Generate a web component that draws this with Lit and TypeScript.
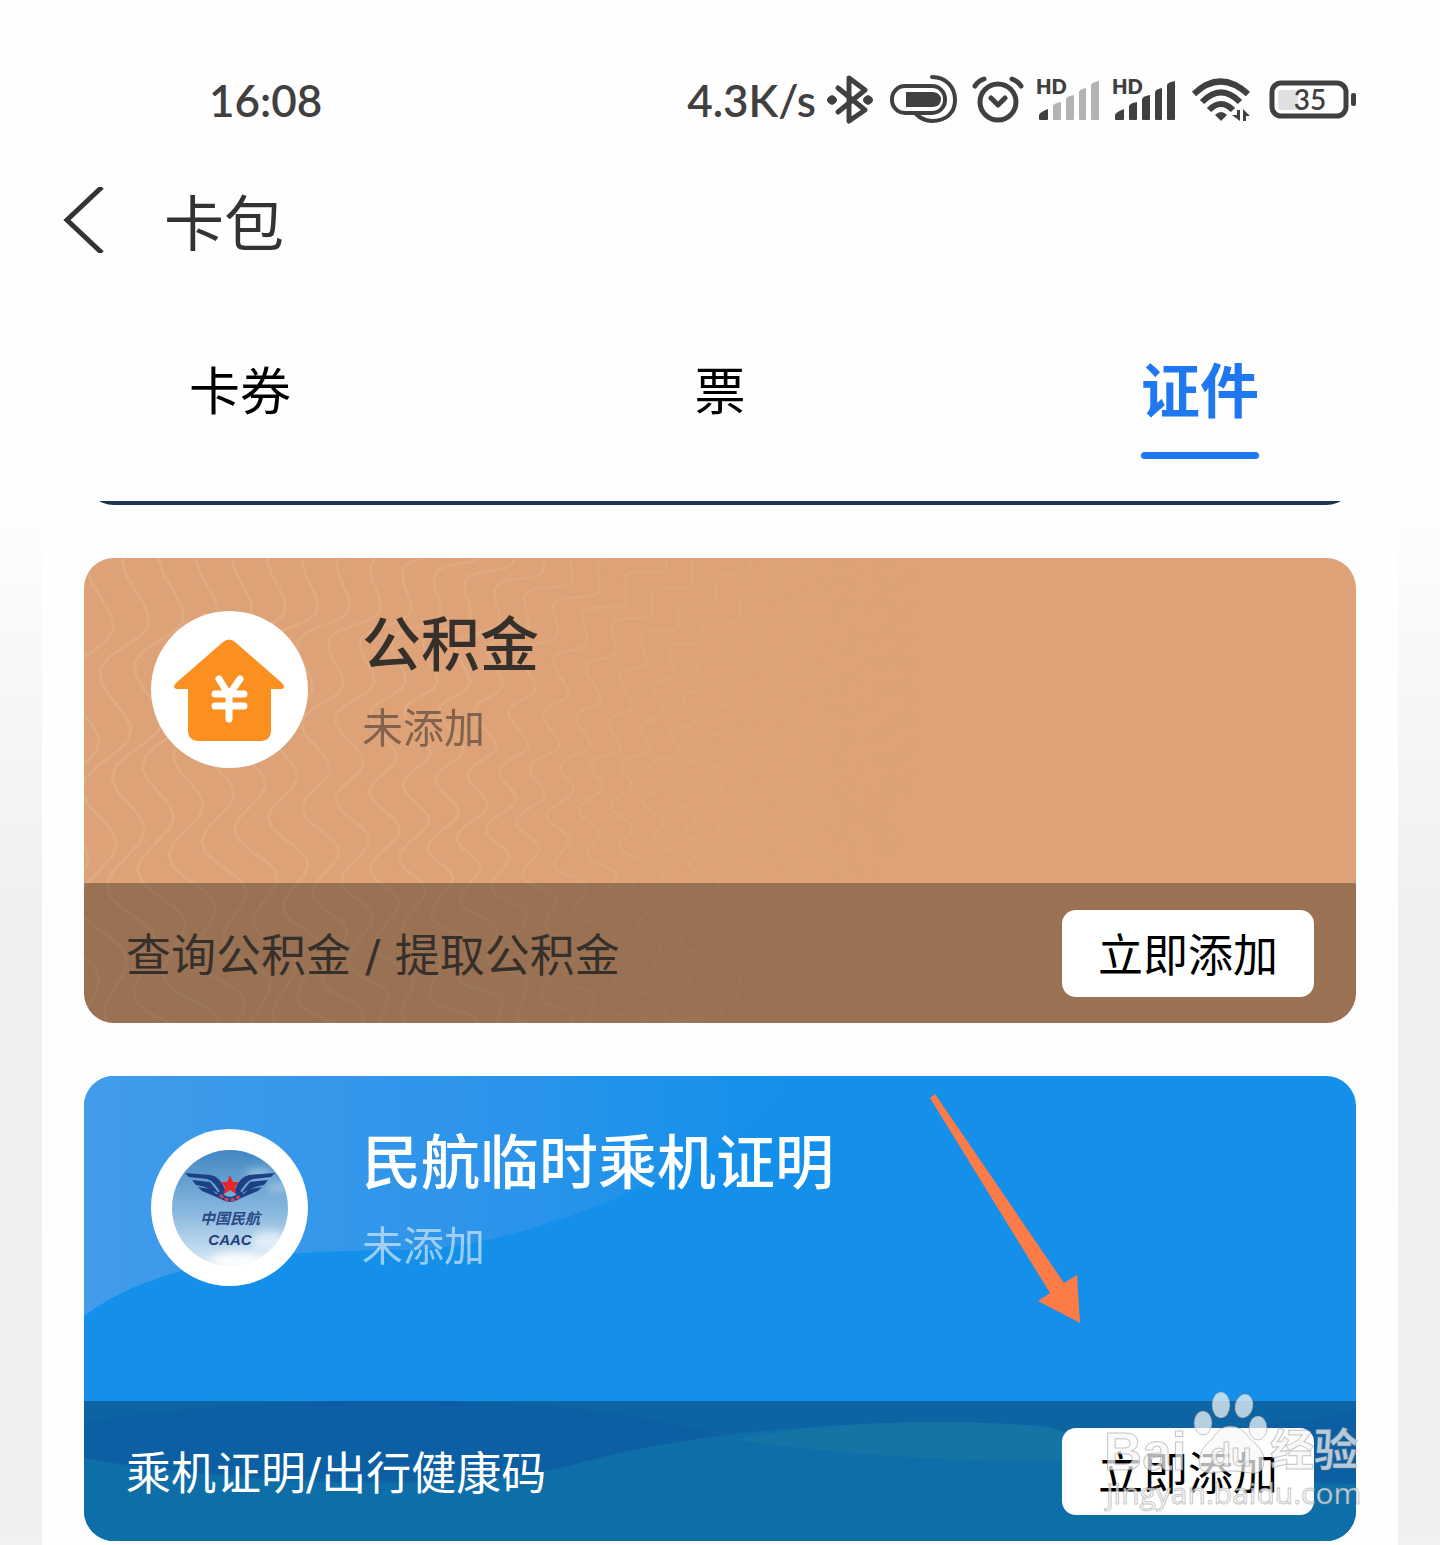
import { LitElement, html, svg, css, nothing } from "lit";
import { customElement, property, state } from "lit/decorators.js";
import { classMap } from "lit/directives/class-map.js";

interface Credential {
  id: string;
  title: string;
  status: string;
  summary: string;
  action: string;
}

const CREDENTIALS: Credential[] = [
  { id: "fund", title: "公积金", status: "未添加", summary: "查询公积金 / 提取公积金", action: "立即添加" },
  { id: "flight", title: "民航临时乘机证明", status: "未添加", summary: "乘机证明/出行健康码", action: "立即添加" },
];

const TABS = ["卡券", "票", "证件"];

/* Guilloche pattern: rings around a point, each rippled and slightly out of phase with the last. */
function guilloche(cx: number, cy: number): string[] {
  const rings: string[] = [];
  for (let i = 0; i < 30; i++) {
    const r = 40 + i * 31;
    const points: string[] = [];
    for (let deg = 120; deg <= 290; deg += 1) {
      const a = (deg * Math.PI) / 180;
      const ripple = (4 + r * 0.02) * Math.sin(42 * a + i * 0.75) + 7 * Math.sin(11 * a + i * 0.5);
      const x = cx + (r + ripple) * Math.cos(a);
      const y = cy + (r + ripple) * Math.sin(a) * 0.94;
      points.push(`${x.toFixed(1)} ${y.toFixed(1)}`);
    }
    rings.push("M" + points.join("L"));
  }
  return rings;
}

const RINGS = guilloche(830, 260);

@customElement("status-bar")
export class StatusBar extends LitElement {
  static styles = css`
    :host {
      display: flex;
      justify-content: space-between;
      align-items: center;
      padding: 72px 84px 0 209px;
      line-height: 56px;
      font-family: Lato, "Noto Sans CJK SC", sans-serif;
      font-size: 44px;
      font-weight: 600;
      color: #404040;
    }
    .right {
      display: flex;
      align-items: center;
      gap: 14px;
    }
    svg {
      display: block;
      overflow: visible;
    }
    .line {
      fill: none;
      stroke: #404040;
      stroke-linecap: round;
      stroke-linejoin: round;
    }
    .solid {
      fill: #404040;
    }
    .dim {
      fill: #b3b3b3;
    }
    .level {
      fill: #e0e0e0;
    }
    .hd {
      font-size: 20px;
      font-weight: 800;
      fill: #404040;
    }
    .percent {
      font-size: 28px;
      font-weight: 600;
      fill: #404040;
    }
  `;

  private signal(strong: boolean) {
    const rest = strong ? "solid" : "dim";
    return svg`<svg width="62" height="42" viewBox="2 0 62 42" aria-hidden="true">
      <text class="hd" x="0" y="15">HD</text>
      <path class="solid" d="M3 41V36Q4 33 12 30V40Q12 41 11 41H4Q3 41 3 40Z"></path>
      <path class=${rest} d="M17 40V27Q18 24 25 23V40Q25 41 24 41H18Q17 41 17 40Z"></path>
      <path class=${rest} d="M30 40V20Q31 17 38 16V40Q38 41 37 41H31Q30 41 30 40Z"></path>
      <path class=${rest} d="M43 40V13Q44 10 50 9V40Q50 41 49 41H44Q43 41 43 40Z"></path>
      <path class=${rest} d="M55 40V6Q56 3 63 2V40Q63 41 62 41H56Q55 41 55 40Z"></path>
    </svg>`;
  }

  render() {
    return html`
      <span>16:08</span>
      <div class="right">
        <span>4.3K/s</span>
        <svg width="42" height="50" viewBox="3 0 42 50" aria-hidden="true">
          <path class="line" stroke-width="5" d="M11 13L38 35L22 46V3L38 15L11 37"></path>
          <path class="solid" d="M5 20Q10 22 10 25T5 30Q0 28 0 25T5 20ZM41 20Q46 22 46 25T41 30Q36 28 36 25T41 20Z"></path>
        </svg>
        <svg width="72" height="50" viewBox="-3 0 72 50" aria-hidden="true">
          <rect class="line" stroke-width="4" x="3" y="11" width="53" height="27" rx="13"></rect>
          <path class="line" stroke-width="4" d="M43 2C57 2 66 12 66 25S57 46 43 46Q34 46 27 39"></path>
          <path class="solid" d="M17 17H44Q52 18 52 24.500T44 32H17Z"></path>
        </svg>
        <svg width="52" height="50" viewBox="0 0 52 50" aria-hidden="true">
          <circle class="line" stroke-width="5" cx="26" cy="27" r="18"></circle>
          <path class="line" stroke-width="5" d="M19 23L26 30L33 23M3 11Q6 6 12 4M49 11Q46 6 40 4"></path>
        </svg>
        ${this.signal(false)} ${this.signal(true)}
        <svg width="64" height="48" viewBox="-1 0 64 48" aria-hidden="true">
          <g fill="none" stroke="#404040" stroke-width="6">
            <path d="M3 18Q29 -7 57 18"></path>
            <path d="M11 26Q30 7 49 26"></path>
            <path d="M18 34Q30 22 42 34"></path>
          </g>
          <path class="solid" d="M24 39Q30 33 36 39L30 45Z"></path>
          <path class="solid" d="M46 34H49V45L41 39H46ZM52 45V33L59 40H55V45Z"></path>
        </svg>
        <svg width="88" height="40" viewBox="0 0 88 40" aria-hidden="true">
          <rect class="line" stroke-width="5" x="4" y="3" width="74" height="33" rx="9"></rect>
          <rect class="level" x="10" y="10" width="20" height="20" rx="3"></rect>
          <rect class="solid" x="83" y="13" width="5" height="13" rx="2"></rect>
          <text class="percent" x="42" y="30" text-anchor="middle">35</text>
        </svg>
      </div>
    `;
  }
}

@customElement("credential-card")
export class CredentialCard extends LitElement {
  @property({ attribute: false }) item!: Credential;

  static styles = css`
    :host {
      display: block;
    }
    .card {
      display: grid;
      overflow: hidden;
      border-radius: 30px;
      background: #dda277;
      color: #36302c;
    }
    .flight {
      background: #1490ea;
      color: #fff;
    }
    .art,
    .content {
      grid-area: 1 / 1;
      min-width: 0;
    }
    .art {
      width: 100%;
      height: 100%;
      min-height: 0;
      contain: size;
    }
    .top {
      display: flex;
      gap: 54px;
      min-height: 272px;
      padding: 53px 67px 0;
    }
    .badge {
      flex: none;
      width: 157px;
      height: 157px;
    }
    h2 {
      margin: 0;
      font-size: 59px;
      font-weight: 500;
      line-height: 60px;
    }
    .status {
      margin: 24px 0 0;
      font-size: 41px;
      line-height: 60px;
      opacity: 0.55;
    }
    .foot {
      display: flex;
      align-items: center;
      justify-content: space-between;
      min-height: 140px;
      padding: 0 42px;
      background: rgba(0, 0, 0, 0.3);
    }
    .summary {
      margin: 0;
      padding-top: 8px;
      font-family: "DejaVu Sans", "Noto Sans CJK SC", sans-serif;
      font-size: 45px;
      line-height: 64px;
    }
    button {
      border: 0;
      border-radius: 14px;
      padding: 11px 36px 12px;
      background: #fff;
      color: #000;
      font: inherit;
      font-size: 45px;
      line-height: 64px;
    }
    .ring {
      fill: none;
      stroke: #e9bd96;
      stroke-width: 3;
      stroke-linejoin: round;
      opacity: 0.36;
    }
    .caac {
      font: italic 700 15px "Liberation Sans", sans-serif;
      fill: #253c7d;
    }
    .script {
      font: italic 700 15px "Noto Sans CJK SC", sans-serif;
      fill: #2a4a86;
    }
  `;

  private fundArt() {
    return svg`<svg class="art" viewBox="0 0 1272 465" preserveAspectRatio="none" aria-hidden="true">
      <defs>
        <linearGradient id="fade">
          <stop offset="0" stop-color="#fff"></stop>
          <stop offset="0.3" stop-color="#fff" stop-opacity="0.8"></stop>
          <stop offset="0.66" stop-color="#fff" stop-opacity="0"></stop>
        </linearGradient>
        <mask id="veil"><rect width="1272" height="465" fill="url(#fade)"></rect></mask>
      </defs>
      <g mask="url(#veil)">${RINGS.map((d) => svg`<path class="ring" d=${d}></path>`)}</g>
    </svg>`;
  }

  private flightArt() {
    return svg`<svg class="art" viewBox="0 0 1272 465" preserveAspectRatio="none" aria-hidden="true">
      <defs>
        <linearGradient id="hill">
          <stop offset="0" stop-color="#429ceb"></stop>
          <stop offset="0.6" stop-color="#2b94ea"></stop>
          <stop offset="1" stop-color="#1490ea"></stop>
        </linearGradient>
      </defs>
      <path fill="url(#hill)" d="M0 0H705C670 50 610 90 527 124C440 160 370 175 300 174C200 176 80 180 0 240Z"></path>
      <path fill="#1088e9" d="M0 346C180 318 480 310 653 364C560 396 430 410 300 404C180 402 90 398 0 382Z"></path>
      <path fill="#1088e9" d="M1020 350C1110 360 1190 350 1272 335V408C1180 400 1100 380 1020 350Z"></path>
      <path fill="#159ef0" d="M0 382C120 404 330 420 476 392C600 356 740 345 900 347C1040 372 1140 410 1272 408V465H0Z"></path>
      <path fill="#1fa7ed" d="M653 364C740 345 850 343 960 350L1060 380C900 392 760 378 653 364Z"></path>
    </svg>`;
  }

  private fundBadge() {
    return svg`<svg class="badge" viewBox="0 0 157 157" aria-hidden="true">
      <circle cx="78.500" cy="78.500" r="78.500" fill="#fff"></circle>
      <path fill="#fb8f20" d="M72 31Q78 26 84 31L131 72Q136 78 129 78H120V119Q120 130 109 130H48Q37 130 37 119V78H28Q20 78 25 72Z"></path>
      <path fill="none" stroke="#fff" stroke-width="7" stroke-linecap="round" stroke-linejoin="round"
        d="M68 68L78 84L89 68M78 84V108M64 83H93M64 95H93"></path>
    </svg>`;
  }

  private flightBadge() {
    return svg`<svg class="badge" viewBox="0 0 157 157" aria-hidden="true">
      <defs>
        <linearGradient id="sky" x2="0" y2="1">
          <stop offset="0" stop-color="#3f86c2"></stop>
          <stop offset="0.55" stop-color="#8bbadf"></stop>
          <stop offset="1" stop-color="#dcebf6"></stop>
        </linearGradient>
        <clipPath id="disc"><circle cx="79" cy="79" r="58"></circle></clipPath>
        <filter id="cloud"><feGaussianBlur stdDeviation="4"></feGaussianBlur></filter>
      </defs>
      <circle cx="78.500" cy="78.500" r="78.500" fill="#fff"></circle>
      <g clip-path="url(#disc)">
        <rect x="20" y="20" width="118" height="118" fill="url(#sky)"></rect>
        <g filter="url(#cloud)" fill="#fff">
          <ellipse cx="118" cy="112" rx="18" ry="10" opacity="0.6"></ellipse>
          <ellipse cx="88" cy="132" rx="30" ry="9" opacity="0.9"></ellipse>
          <ellipse cx="108" cy="44" rx="14" ry="4" opacity="0.45"></ellipse>
          <ellipse cx="127" cy="58" rx="12" ry="4" opacity="0.4"></ellipse>
        </g>
      </g>
      <g fill="#1d3f83">
        <path d="M34 44L60 46Q70 48 75 63L71 67Q64 52 56 50L38 48Z"></path>
        <path d="M124 44L98 46Q88 48 83 63L87 67Q94 52 102 50L120 48Z"></path>
        <path d="M41 51L59 53L71 68Q60 58 45 56ZM47 58L60 60L72 71Q61 66 51 62Z"></path>
        <path d="M117 51L99 53L87 68Q98 58 113 56ZM111 58L98 60L86 71Q97 66 107 62Z"></path>
      </g>
      <path fill="none" stroke="#1d3f83" stroke-width="5" d="M67 64Q79 77 91 64"></path>
      <path fill="none" stroke="#c8475c" stroke-width="3" stroke-dasharray="4 2" d="M69 66Q79 76 90 66"></path>
      <path fill="#e8262e" d="M79 46L82 53L88 53L84 58L85 65L79 61L73 65L74 58L70 53L76 53Z"></path>
      <text class="script" x="79" y="95" text-anchor="middle">中国民航</text>
      <text class="caac" x="79" y="116" text-anchor="middle">CAAC</text>
    </svg>`;
  }

  render() {
    if (!this.item) return nothing;
    const flight = this.item.id === "flight";
    return html`
      <article class=${classMap({ card: true, flight })}>
        ${flight ? this.flightArt() : this.fundArt()}
        <div class="content">
          <div class="top">
            ${flight ? this.flightBadge() : this.fundBadge()}
            <div>
              <h2>${this.item.title}</h2>
              <p class="status">${this.item.status}</p>
            </div>
          </div>
          <div class="foot">
            <p class="summary">${this.item.summary}</p>
            <button type="button">${this.item.action}</button>
          </div>
        </div>
      </article>
    `;
  }
}

@customElement("app-root")
export class AppRoot extends LitElement {
  @state() private tab = 2;

  static styles = css`
    :host {
      display: flex;
      flex-direction: column;
      min-height: 100vh;
      background: #fefefe;
      font-family: "Noto Sans CJK SC", sans-serif;
      color: #333;
    }
    .header {
      display: flex;
      align-items: center;
      gap: 60px;
      padding: 48px 62px 0;
    }
    .back {
      display: block;
      border: 0;
      padding: 0;
      background: none;
    }
    .back svg {
      display: block;
    }
    h1 {
      margin: 0;
      font-size: 60px;
      font-weight: 400;
      line-height: 88px;
    }
    .tabs {
      display: grid;
      grid-template-columns: repeat(3, 1fr);
      justify-items: center;
      padding: 84px 0 42px;
    }
    .tab {
      border: 0;
      border-bottom: 7px solid transparent;
      padding: 0;
      background: none;
      color: #000;
      font: inherit;
      font-size: 51px;
      line-height: 80px;
    }
    .label {
      display: block;
      padding-bottom: 24px;
    }
    .selected {
      color: #1f78f0;
      font-size: 59px;
      font-weight: 700;
    }
    .selected::after {
      content: "";
      display: block;
      height: 7px;
      border-radius: 4px;
      background: #1f78f0;
    }
    .tab.selected {
      border-bottom: 0;
    }
    .scroll {
      flex: 1;
      padding: 0 42px;
      background: linear-gradient(#fefefe, #f8f8f8 160px, #f0f0f0 420px, #f1f1f1);
    }
    .panel {
      display: flex;
      flex-direction: column;
      gap: 53px;
      min-height: 100%;
      box-sizing: border-box;
      padding: 0 42px 4px;
      background: #fefefe;
    }
    .previous {
      display: flex;
      align-items: flex-end;
      height: 4px;
      overflow: hidden;
    }
    .edge {
      flex: 1;
      height: 60px;
      border-radius: 30px;
      background: #1e3556;
    }
    .slot {
      position: relative;
    }
    .arrow,
    .mark {
      position: absolute;
      pointer-events: none;
    }
    .arrow {
      top: 18px;
      right: 274px;
    }
    .mark {
      right: -10px;
      bottom: 20px;
      overflow: visible;
    }
    .brand,
    .url {
      fill: rgba(248, 248, 248, 0.72);
      stroke: rgba(130, 130, 130, 0.45);
      stroke-width: 1px;
    }
    .brand {
      font: 700 53px "Liberation Sans", sans-serif;
    }
    .du {
      font: 700 34px "Liberation Sans", sans-serif;
    }
    .han {
      font: 700 44px "Noto Sans CJK SC", sans-serif;
    }
    .url {
      font: 400 30px "Open Sans", sans-serif;
    }
  `;

  private overlay() {
    return html`
      <svg class="arrow" width="152" height="230" viewBox="0 0 152 230" aria-hidden="true">
        <path fill="#fd7b46" d="M0 4L5 0L134 189L147 181L150 229L108 207L120 199Z"></path>
      </svg>
      <svg class="mark" width="264" height="132" viewBox="0 0 264 132" aria-hidden="true">
        <g class="brand">
          <ellipse cx="119" cy="16" rx="9" ry="13"></ellipse>
          <ellipse cx="142" cy="17" rx="9" ry="12" transform="rotate(12 142 17)"></ellipse>
          <ellipse cx="101" cy="34" rx="9" ry="12"></ellipse>
          <ellipse cx="156" cy="39" rx="9" ry="12"></ellipse>
          <path d="M128 37Q140 37 148 50Q162 60 162 72Q162 86 148 84Q128 80 110 84Q96 85 97 70Q98 60 110 50Q118 37 128 37Z"></path>
        </g>
        <text class="brand" x="2" y="81">Bai</text>
        <text class="brand du" x="129" y="77" text-anchor="middle">du</text>
        <text class="brand han" x="168" y="77">经验</text>
        <text class="url" x="4" y="115">jingyan.baidu.com</text>
      </svg>
    `;
  }

  render() {
    return html`
      <status-bar></status-bar>
      <header class="header">
        <button class="back" type="button" aria-label="返回">
          <svg width="42" height="66" viewBox="0 0 42 66">
            <path fill="none" stroke="#333" stroke-width="5" d="M40 0L5 33L40 66"></path>
          </svg>
        </button>
        <h1>卡包</h1>
      </header>
      <nav class="tabs" role="tablist">
        ${TABS.map(
          (name, i) => html`<button
            type="button"
            role="tab"
            aria-selected=${i === this.tab ? "true" : "false"}
            class=${classMap({ tab: true, selected: i === this.tab })}
            @click=${() => (this.tab = i)}
          ><span class="label">${name}</span></button>`
        )}
      </nav>
      <main class="scroll">
        <div class="panel">
          <div class="previous"><div class="edge"></div></div>
          ${CREDENTIALS.map(
            (item) => html`<div class="slot">
              <credential-card .item=${item}></credential-card>
              ${item.id === "flight" ? this.overlay() : nothing}
            </div>`
          )}
        </div>
      </main>
    `;
  }
}
